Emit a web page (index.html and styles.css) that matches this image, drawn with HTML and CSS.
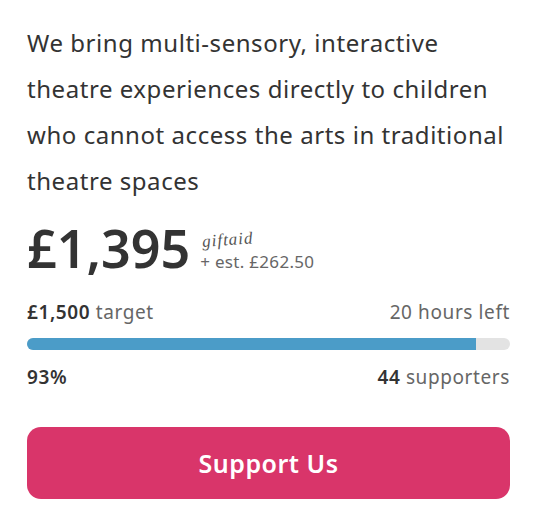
FILE: index.html
```html
<!DOCTYPE html>
<html>
	<head>
		<meta charset="UTF-8">
		<title>Support Us</title>
		<link rel="stylesheet" href="styles.css">
	</head>
	<body>
		<div class="panel">
			<p class="blurb">We bring multi-sensory, interactive theatre experiences directly to children who cannot access the arts in traditional theatre spaces</p>

			<div class="raised">
				<span class="amount">£1,395</span>
				<div class="giftaid">
					<span class="giftaid-logo">giftaid</span>
					<span class="giftaid-est">+ est. £262.50</span>
				</div>
			</div>

			<div class="row target-row">
				<span><b>£1,500</b> target</span>
				<span>20 hours left</span>
			</div>

			<div class="bar"><div class="bar-fill" style="width:93%"></div></div>

			<div class="row stats-row">
				<span><b>93%</b></span>
				<span><b>44</b> supporters</span>
			</div>

			<a class="support-btn" href="#">Support Us</a>
		</div>
	</body>
</html>
```

FILE: styles.css
```css
body, p{margin:0;}
a{text-decoration: none;}
body{
	background: #fff;
	font-family: "Noto Sans", sans-serif;
	color: #333;
}
.panel{
	width: 483px;
	padding: 20px 27px 0 27px;
}

.blurb{
	font-size: 24px;
	line-height: 46px;
	letter-spacing: 0.55px;
	color: #333;
}

.raised{
	display: flex;
	align-items: last baseline;
	margin-top: 16px;
}
.amount{
	font-size: 52px;
	font-weight: 600;
	line-height: 56px;
	color: #333;
}
.giftaid{
	display: flex;
	flex-direction: column;
	margin-left: 10px;
}
.giftaid-logo{
	font-family: "Liberation Serif", serif;
	font-style: italic;
	font-size: 17px;
	line-height: 18px;
	letter-spacing: 1px;
	color: #555;
	margin: 0 0 4px 2px;
	transform: rotate(-4deg);
}
.giftaid-est{
	font-size: 17px;
	line-height: 22px;
	letter-spacing: 0.3px;
	color: #666;
}

.row{
	display: flex;
	justify-content: space-between;
	font-size: 19px;
	letter-spacing: 0.6px;
	color: #666;
}
.row b{
	color: #333;
	font-weight: 600;
}
.target-row{
	margin-top: 23px;
	line-height: 26px;
}
.bar{
	height: 12px;
	border-radius: 6px;
	background: #e3e3e3;
	overflow: hidden;
	margin-top: 13px;
}
.bar-fill{
	height: 100%;
	background: #4b9cc8;
}
.stats-row{
	margin-top: 14px;
	line-height: 26px;
}

.support-btn{
	display: flex;
	align-items: center;
	justify-content: center;
	height: 72px;
	margin-top: 37px;
	border-radius: 14px;
	background: #d9356a;
	color: #fff;
	font-size: 25px;
	font-weight: 600;
	letter-spacing: 0.5px;
}
```
